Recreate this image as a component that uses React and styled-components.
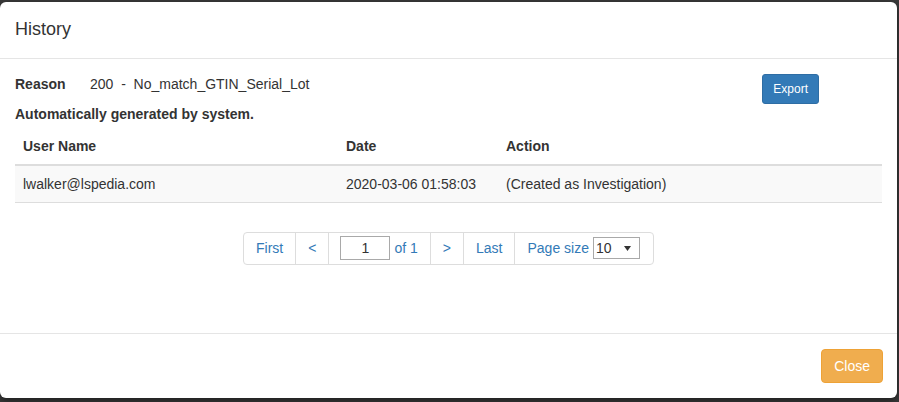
import React from "react";
import styled, { createGlobalStyle } from "styled-components";

const Global = createGlobalStyle`
  html, body { margin: 0; padding: 0; background: #3a3a3a; }
  body { font-family: "Liberation Sans", Arial, Helvetica, sans-serif; font-size: 14px; line-height: 20px; color: #333; }
  * { box-sizing: border-box; }
`;

const Backdrop = styled.div`
  width: 899px;
  height: 402px;
  padding-top: 2px;
  background: #3a3a3a;
  overflow: hidden;
`;

const Modal = styled.div`
  width: 897px;
  background: #fff;
  border-radius: 6px;
  box-shadow: 0 3px 9px rgba(0, 0, 0, 0.5);
  display: flex;
  flex-direction: column;
`;

const Header = styled.div`
  padding: 15px;
  border-bottom: 1px solid #e5e5e5;
`;

const Title = styled.h4`
  margin: 0;
  font-size: 18px;
  font-weight: 500;
  line-height: 25.7px;
  color: #333;
`;

const Body = styled.div`
  padding: 15px 15px 68px;
`;

const ReasonRow = styled.div`
  display: flex;
  align-items: flex-start;
`;

const ReasonLabel = styled.span`
  font-weight: bold;
  width: 75px;
`;

const ReasonValue = styled.span``;

const Button = styled.button`
  font-family: inherit;
  border: 1px solid ${(p) => p.$border};
  background: ${(p) => p.$bg};
  color: #fff;
  border-radius: ${(p) => (p.$small ? "3px" : "4px")};
  font-size: ${(p) => (p.$small ? "12px" : "14px")};
  line-height: ${(p) => (p.$small ? "18px" : "20px")};
  padding: ${(p) => (p.$small ? "5px 10px" : "6px 12px")};
  cursor: pointer;
`;

const ExportButton = styled(Button)`
  margin-left: auto;
  margin-right: 63px;
`;

const AutoNote = styled.p`
  margin: 0 0 4px;
  font-weight: bold;
`;

const Table = styled.table`
  width: 100%;
  border-collapse: collapse;
  table-layout: fixed;
  margin-bottom: 29px;
`;

const Th = styled.th`
  text-align: left;
  padding: 8px;
  font-weight: bold;
  border-bottom: 2px solid #ddd;
`;

const Td = styled.td`
  padding: 8px;
  border-bottom: 1px solid #ddd;
`;

const Tr = styled.tr`
  background: ${(p) => (p.$striped ? "#f9f9f9" : "transparent")};
`;

const PagerWrap = styled.div`
  display: flex;
  justify-content: center;
`;

const Pager = styled.div`
  display: inline-flex;
  border: 1px solid #ddd;
  border-radius: 4px;
`;

const PagerItem = styled.div`
  display: flex;
  align-items: center;
  gap: 4px;
  padding: 6px ${(p) => p.$pr || 12}px 6px ${(p) => p.$pl || 12}px;
  color: #337ab7;
  border-left: ${(p) => (p.$first ? "none" : "1px solid #ddd")};
  line-height: 19px;
`;

const PageInput = styled.div`
  width: 50px;
  height: 24px;
  border: 1px solid #a9a9a9;
  color: #333;
  display: flex;
  align-items: center;
  justify-content: center;
  margin: -3px 0;
`;

const Select = styled.div`
  width: 47px;
  height: 22px;
  border: 1px solid #a9a9a9;
  color: #333;
  display: flex;
  align-items: center;
  justify-content: space-between;
  padding: 0 8px 0 2px;
  margin: -2px 0;
`;

const Footer = styled.div`
  padding: 15px;
  border-top: 1px solid #e5e5e5;
  display: flex;
  justify-content: flex-end;
`;

const CloseButton = styled(Button)`
  margin-right: -1px;
`;

export default function App() {
  return (
    <>
      <Global />
      <Backdrop>
        <Modal>
          <Header>
            <Title>History</Title>
          </Header>
          <Body>
            <ReasonRow>
              <ReasonLabel>Reason</ReasonLabel>
              <ReasonValue>200&nbsp; - &nbsp;No_match_GTIN_Serial_Lot</ReasonValue>
              <ExportButton $small $bg="#337ab7" $border="#2e6da4">
                Export
              </ExportButton>
            </ReasonRow>
            <AutoNote>Automatically generated by system.</AutoNote>
            <Table>
              <colgroup>
                <col style={{ width: 323 }} />
                <col style={{ width: 160 }} />
                <col />
              </colgroup>
              <thead>
                <tr>
                  <Th>User Name</Th>
                  <Th>Date</Th>
                  <Th>Action</Th>
                </tr>
              </thead>
              <tbody>
                <Tr $striped>
                  <Td>lwalker@lspedia.com</Td>
                  <Td>2020-03-06 01:58:03</Td>
                  <Td>(Created as Investigation)</Td>
                </Tr>
              </tbody>
            </Table>
            <PagerWrap>
              <Pager>
                <PagerItem $first>First</PagerItem>
                <PagerItem>&lt;</PagerItem>
                <PagerItem $pl={11}>
                  <PageInput>1</PageInput>
                  <span>of 1</span>
                </PagerItem>
                <PagerItem>&gt;</PagerItem>
                <PagerItem>Last</PagerItem>
                <PagerItem $pr={13}>
                  <span>Page size</span>
                  <Select>
                    <span>10</span>
                    <svg width="7" height="5" viewBox="0 0 7 5">
                      <path d="M0 0 L7 0 L3.5 5 Z" fill="#333" />
                    </svg>
                  </Select>
                </PagerItem>
              </Pager>
            </PagerWrap>
          </Body>
          <Footer>
            <CloseButton $bg="#f0ad4e" $border="#eea236">
              Close
            </CloseButton>
          </Footer>
        </Modal>
      </Backdrop>
    </>
  );
}
